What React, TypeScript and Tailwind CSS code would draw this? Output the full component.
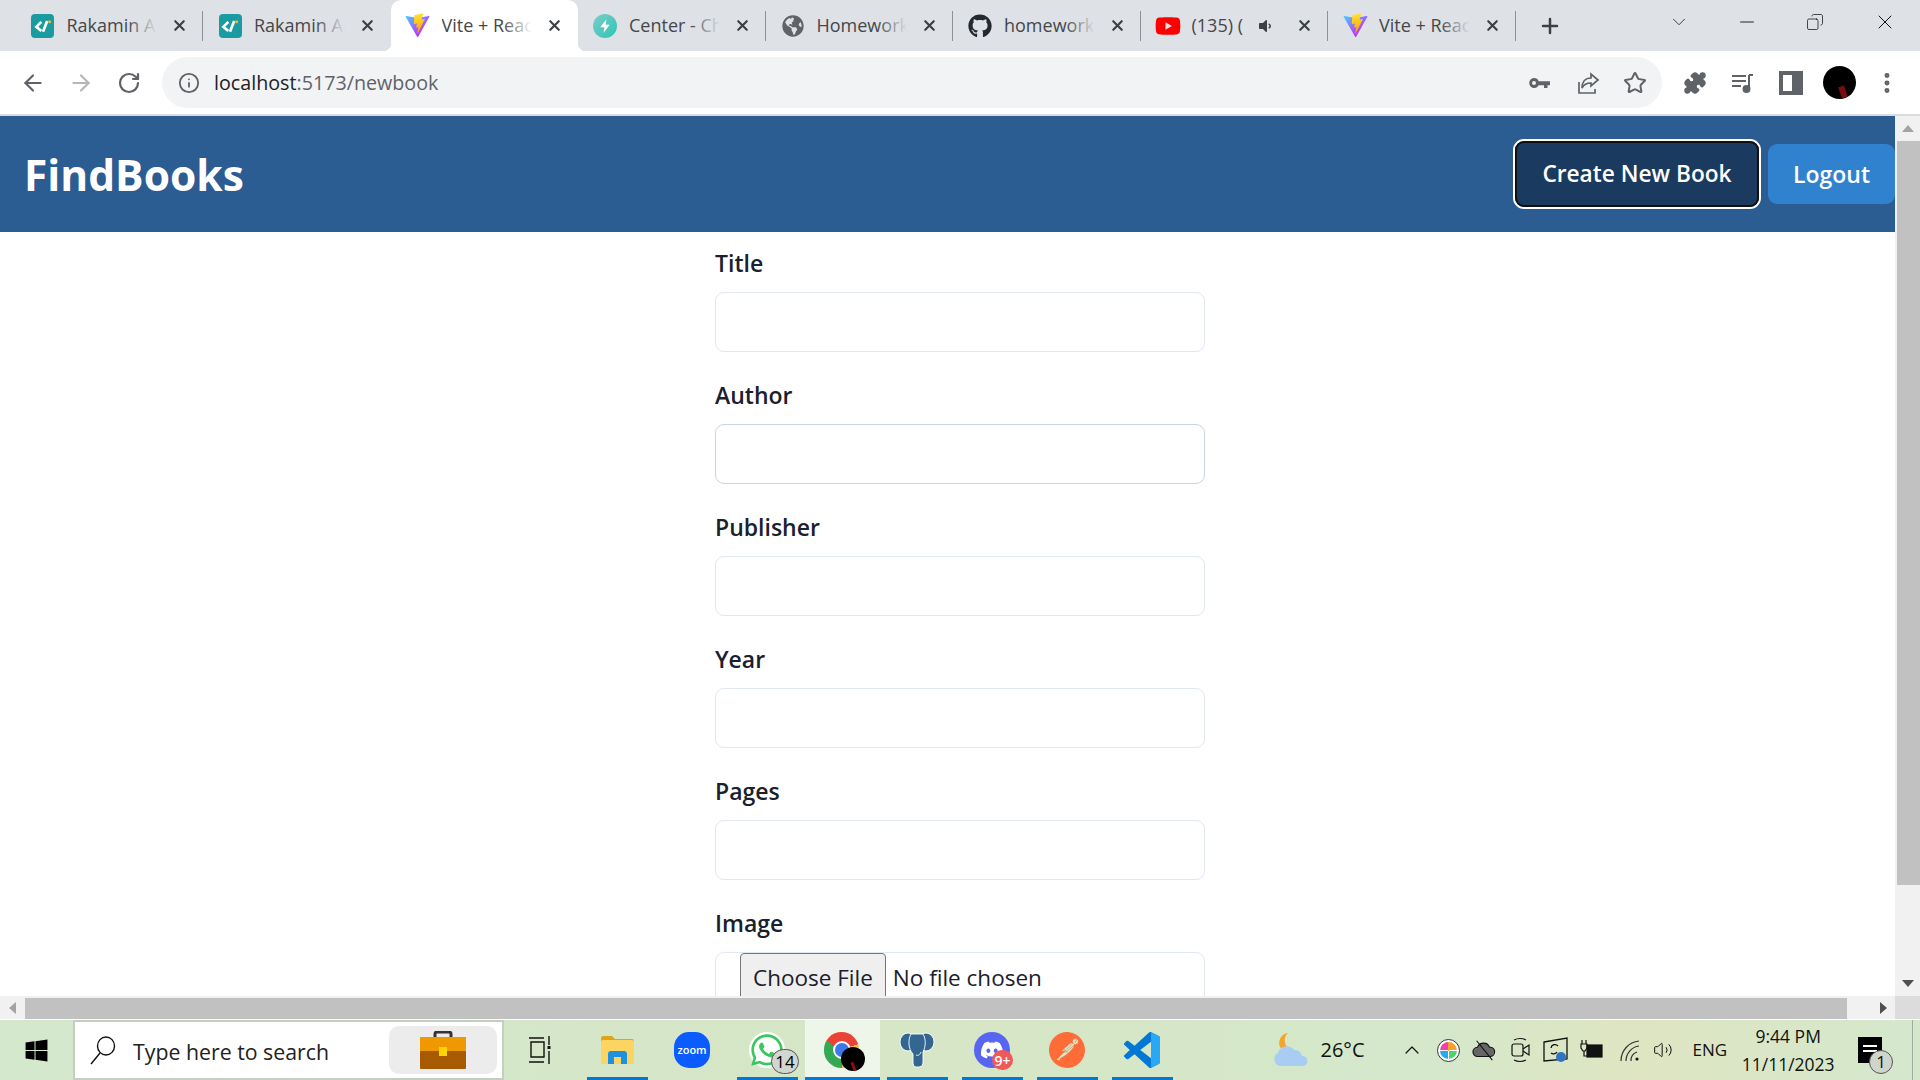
import { ArrowLeft, ArrowRight, RotateCw, Info, Star, X, Plus, ChevronDown, Minus, Copy, ChevronUp, Volume2, MoreVertical, Puzzle } from "lucide-react";
import { FaDiscord, FaGithub, FaGlobeAmericas, FaWhatsapp, FaVolumeDown, FaWindows, FaYoutube } from "react-icons/fa";
import { SiPostman } from "react-icons/si";
import type { ReactNode } from "react";

// --- Favicons ---
function RakaminIcon() {
  return (
    <span className="flex h-[24px] w-[23px] items-center justify-center rounded-[4px] bg-[#1a9ba1]">
      <svg viewBox="0 0 24 24" className="h-[20px] w-[20px]" fill="none" stroke="white" strokeWidth="3.2">
        <path d="M10 7 L4 13 L10 18" />
        <path d="M17 6 L12 19" />
        <circle cx="20" cy="7" r="1.8" fill="#f7b733" stroke="none" />
      </svg>
    </span>
  );
}

function ViteIcon() {
  return (
    <svg viewBox="0 0 410 404" className="h-[25px] w-[25px]">
      <defs>
        <linearGradient id="viteA" x1="6" y1="33" x2="235" y2="344" gradientUnits="userSpaceOnUse">
          <stop stopColor="#41D1FF" />
          <stop offset="1" stopColor="#BD34FE" />
        </linearGradient>
        <linearGradient id="viteB" x1="194" y1="8" x2="236" y2="293" gradientUnits="userSpaceOnUse">
          <stop stopColor="#FFEA83" />
          <stop offset="0.08" stopColor="#FFDD35" />
          <stop offset="1" stopColor="#FFA800" />
        </linearGradient>
      </defs>
      <path d="M399.6 59.5L215.9 388.2c-3.8 6.8-13.5 6.8-17.4.1L11.2 59.5c-4.2-7.4 2.1-16.3 10.4-14.8l183.9 32.9c1.2.2 2.4.2 3.5 0l180-32.9c8.3-1.5 14.7 7.3 10.5 14.8z" fill="url(#viteA)" />
      <path d="M292.965 1.574L156.801 28.255c-2.2.4-3.9 2.3-4 4.6l-8.4 141.5c-.2 3.3 2.9 5.9 6.1 5.2l37.9-8.7c3.6-.8 6.8 2.3 6.1 5.9l-11.3 55.2c-.7 3.7 2.8 6.9 6.4 5.8l23.4-7.1c3.6-1.1 7.1 2.1 6.4 5.8l-17.9 86.6c-1.1 5.4 6.1 8.4 9.1 3.7l2-3.1 110.9-221.3c1.9-3.7-1.3-7.9-5.4-7.1l-39 7.5c-3.7.7-6.8-2.7-5.8-6.3l25.5-88.3c1-3.6-2.1-7.1-5.9-6.3z" fill="url(#viteB)" />
    </svg>
  );
}

function ChakraIcon() {
  return (
    <span className="flex h-[24px] w-[24px] items-center justify-center rounded-full bg-[linear-gradient(135deg,#7bcdc8,#2fc5b6)]">
      <svg viewBox="0 0 24 24" className="h-[16px] w-[16px]" fill="white">
        <path d="M14 2 L5 14 h6 l-1 8 L19 10 h-6 z" />
      </svg>
    </span>
  );
}

// --- Tabs ---
interface TabData {
  title: string;
  icon: ReactNode;
  active?: boolean;
  sep?: boolean;
  audio?: boolean;
}

const TABS: TabData[] = [
  { title: "Rakamin Academy", icon: <RakaminIcon />, sep: true },
  { title: "Rakamin Academy", icon: <RakaminIcon /> },
  { title: "Vite + React", icon: <ViteIcon />, active: true },
  { title: "Center - Chakra", icon: <ChakraIcon />, sep: true },
  { title: "Homework", icon: <FaGlobeAmericas className="h-[22px] w-[22px] text-[#5f6368]" />, sep: true },
  { title: "homework", icon: <FaGithub className="h-[24px] w-[24px] text-[#24292f]" />, sep: true },
  { title: "(135) (", icon: <FaYoutube className="h-[26px] w-[26px] text-[#ff0000]" />, sep: true, audio: true },
  { title: "Vite + React", icon: <ViteIcon />, sep: true },
];

function Tab({ tab }: { tab: TabData }) {
  return (
    <div className={`relative flex h-[51px] w-[187.5px] shrink-0 items-center pl-[14px] pr-[15px] ${tab.active ? "rounded-t-[10px] bg-white" : ""}`}>
      {tab.active && (
        <>
          <span className="absolute bottom-0 left-[-8px] h-[8px] w-[8px] bg-[radial-gradient(circle_at_0_0,#dee1e6_8px,#ffffff_8.5px)]" />
          <span className="absolute bottom-0 right-[-8px] h-[8px] w-[8px] bg-[radial-gradient(circle_at_100%_0,#dee1e6_8px,#ffffff_8.5px)]" />
        </>
      )}
      <span className="flex w-[26px] shrink-0 items-center justify-center">{tab.icon}</span>
      <span className="relative ml-[11px] flex-1 overflow-hidden whitespace-nowrap text-[18px] text-[#45474a]">
        {tab.title}
        {!tab.audio && (
          <span className={`absolute inset-y-0 right-0 w-[30px] ${tab.active ? "bg-[linear-gradient(to_right,#ffffff00,#ffffff)]" : "bg-[linear-gradient(to_right,#dee1e600,#dee1e6)]"}`} />
        )}
      </span>
      {tab.audio && <FaVolumeDown className="ml-[2px] h-[16px] w-[16px] text-[#3c4043]" />}
      <X className={`h-[17px] w-[17px] shrink-0 text-[#3c4043] ${tab.audio ? "ml-[23px]" : "ml-[14px]"}`} strokeWidth={3} />
      {tab.sep && <span className="absolute right-0 top-[11px] h-[30px] w-px bg-[#8e9195]" />}
    </div>
  );
}

function TabStrip() {
  return (
    <div className="flex h-[51px] shrink-0 items-center bg-[#dee1e6] pl-[15.5px]">
      {TABS.map((tab, i) => (
        <Tab key={i} tab={tab} />
      ))}
      <Plus className="ml-[22px] h-[24px] w-[24px] text-[#3c4043]" strokeWidth={2.5} />
      <ChevronDown className="ml-[106px] mb-[8px] h-[22px] w-[22px] text-[#333]" strokeWidth={1} />
      <Minus className="ml-[46px] mb-[8px] h-[22px] w-[22px] text-[#111]" strokeWidth={1} />
      <Copy className="ml-[48px] mb-[8px] h-[18px] w-[18px] scale-x-[-1] text-[#111]" strokeWidth={1} />
      <X className="ml-[49px] mb-[8px] h-[24px] w-[24px] text-[#111]" strokeWidth={1} />
    </div>
  );
}

// --- Toolbar ---
function Toolbar() {
  return (
    <div className="flex h-[65px] shrink-0 items-start border-b-2 border-[#dadce0] bg-white pt-[6px]">
      <div className="flex h-[51px] w-[162px] shrink-0 items-center pl-[20px]">
        <ArrowLeft className="h-[26px] w-[26px] text-[#5f6368]" strokeWidth={2} />
        <ArrowRight className="ml-[22px] h-[26px] w-[26px] text-[#b4b6b9]" strokeWidth={2} />
        <RotateCw className="ml-[23px] h-[24px] w-[24px] text-[#5f6368]" strokeWidth={2.2} />
      </div>
      <div className="flex h-[51px] w-[1500px] shrink-0 items-center rounded-full bg-[#f1f3f4] pl-[16px]">
        <Info className="h-[22px] w-[22px] text-[#5f6368]" strokeWidth={2} />
        <span className="ml-[14px] text-[19.7px] text-[#202124]">
          localhost<span className="text-[#5f6368]">:5173/newbook</span>
        </span>
        <svg viewBox="0 0 24 24" className="ml-auto h-[24px] w-[24px] fill-[#5f6368]">
          <path d="M7 7a5 5 0 0 1 4.7 3.3H23v4h-2.5V17H17v-2.7h-5.3A5 5 0 1 1 7 7zm0 3a2 2 0 1 0 0 4 2 2 0 0 0 0-4z" />
        </svg>
        <svg viewBox="0 0 24 24" className="ml-[25px] h-[24px] w-[24px]" fill="none" stroke="#5f6368" strokeWidth="1.7">
          <path d="M3 11 V22 H19 V18" />
          <path d="M22 9 L15 3 V7 C9 7 6 11 6 17 C8 13 11 12 15 12 V15 Z" />
        </svg>
        <Star className="ml-[23px] mr-[15px] h-[24px] w-[24px] text-[#5f6368]" strokeWidth={2} />
      </div>
      <div className="flex h-[51px] flex-1 items-center pl-[21px]">
        <Puzzle className="h-[24px] w-[24px] fill-[#5f6368] text-[#5f6368]" strokeWidth={1.5} />
        <svg viewBox="0 0 24 24" className="ml-[24px] h-[24px] w-[24px]" fill="none" stroke="#5f6368" strokeWidth="2">
          <path d="M1 5h14M1 10h14M1 15h9" />
          <path d="M18 4v14" />
          <path d="M18 4h4" />
          <circle cx="15.5" cy="18" r="3" fill="#5f6368" />
        </svg>
        <span className="ml-[24px] flex h-[24px] w-[24px] justify-start border-[4px] border-r-[11px] border-[#5f6368] bg-white" />
        <span className="relative ml-[20px] block h-[33px] w-[33px] overflow-hidden rounded-full bg-black">
          <span className="absolute bottom-[1px] right-[10px] h-[12px] w-[6px] rotate-[-20deg] bg-[#7a0c0c]" />
        </span>
        <MoreVertical className="ml-[18px] h-[26px] w-[26px] text-[#5f6368]" strokeWidth={2.6} />
      </div>
    </div>
  );
}

// --- Page content ---
const FIELDS = ["Title", "Author", "Publisher", "Year", "Pages"];

function Page() {
  return (
    <div className="relative flex-1 overflow-hidden bg-white">
      <header className="flex h-[116px] items-center justify-between bg-[#2b5c92] pl-[24px]">
        <h1 className="pt-[2px] text-[42.5px] font-bold text-white">FindBooks</h1>
        <div className="flex items-center gap-[7px]">
          <button className="flex h-[70px] w-[248px] items-center justify-center rounded-[11px] border-[2px] border-white bg-[#1a3a5f] pt-[1px] text-[22.7px] font-semibold text-white outline-[2px] -outline-offset-4 outline-[#111]">
            Create New Book
          </button>
          <button className="flex h-[60px] w-[127px] items-center justify-center rounded-[9px] bg-[#3182ce] text-[23px] font-semibold text-white">
            Logout
          </button>
        </div>
      </header>
      <form className="ml-[715px] w-[490px] pt-[12px]">
        {FIELDS.map((f) => (
          <div key={f} className="mb-[24px]">
            <label className="mb-[12px] block pt-[2px] text-[23px] font-semibold leading-[34px] text-[#1a202c]">{f}</label>
            <input
              type="text"
              className={`block h-[60px] w-full rounded-[9px] border px-[24px] ${f === "Author" ? "border-[#cbd5e0]" : "border-[#e2e8f0]"}`}
            />
          </div>
        ))}
        <div>
          <label className="mb-[12px] block pt-[2px] text-[23px] font-semibold leading-[34px] text-[#1a202c]">Image</label>
          <input
            type="file"
            className="block h-[60px] w-full overflow-hidden rounded-[9px] border border-[#e2e8f0] pl-[24px] text-[22.5px] text-[#1a202c] file:mr-[7px] file:h-[50px] file:rounded-[4px] file:border file:border-[#767676] file:bg-[#efefef] file:px-[12px] file:text-[22.5px]"
          />
        </div>
      </form>
    </div>
  );
}

function VScrollbar() {
  return (
    <div className="flex w-[25px] shrink-0 flex-col items-center bg-[#f1f1f1]">
      <div className="flex h-[25px] w-full items-center justify-center">
        <span className="h-0 w-0 border-x-[6px] border-b-[7px] border-x-transparent border-b-[#a3a3a3]" />
      </div>
      <div className="ml-[2px] h-[744px] w-[23px] bg-[#c1c1c1]" />
      <div className="mt-auto flex h-[25px] w-full items-center justify-center">
        <span className="h-0 w-0 border-x-[6px] border-t-[7px] border-x-transparent border-t-[#505050]" />
      </div>
    </div>
  );
}

function HScrollbar() {
  return (
    <div className="flex h-[24px] shrink-0 items-start border-b border-white bg-[#f1f1f1]">
      <div className="flex h-[23px] w-[25px] items-center justify-center">
        <span className="h-0 w-0 border-y-[6px] border-r-[7px] border-y-transparent border-r-[#a3a3a3]" />
      </div>
      <div className="mt-[2px] h-[21px] w-[1822px] bg-[#c1c1c1]" />
      <div className="flex h-[23px] flex-1 items-center justify-end pr-[8px]">
        <span className="h-0 w-0 border-y-[6px] border-l-[7px] border-y-transparent border-l-[#505050]" />
      </div>
      <div className="h-[23px] w-[25px] bg-[#dcdcdc]" />
    </div>
  );
}

// --- Taskbar ---
function FolderIcon() {
  return (
    <svg viewBox="0 0 34 30" className="h-[30px] w-[34px]">
      <path d="M1 3 a2 2 0 0 1 2-2 h9 l3 3 h17 a2 2 0 0 1 2 2 v6 H1 z" fill="#e0a31c" />
      <rect x="1" y="5" width="33" height="24" rx="2" fill="#fcd462" />
      <path d="M8 29 V19 a3 3 0 0 1 3-3 h13 a3 3 0 0 1 3 3 v10 h-6 v-7 h-7 v7 z" fill="#1f8fe0" />
    </svg>
  );
}

function ChromeIcon() {
  return (
    <span className="relative block h-[36px] w-[36px]">
      <span className="flex h-[36px] w-[35px] items-center justify-center rounded-full bg-[conic-gradient(#ea4335_0deg_70deg,#fbc02d_70deg_180deg,#34a853_180deg_300deg,#ea4335_300deg)]">
        <span className="h-[18px] w-[18px] rounded-full border-[2px] border-white bg-[#3c78e8]" />
      </span>
      <span className="absolute bottom-[-3px] right-[-5px] flex h-[24px] w-[24px] items-end justify-center overflow-hidden rounded-full bg-black">
        <span className="h-[9px] w-[3px] rotate-[-20deg] bg-[#8a0f0f]" />
      </span>
    </span>
  );
}

function PostgresIcon() {
  return (
    <svg viewBox="0 0 36 36" className="h-[36px] w-[36px]" fill="#336791" stroke="#ffffff" strokeWidth="0.9">
      <ellipse cx="9" cy="10" rx="8" ry="9" />
      <ellipse cx="27" cy="10" rx="8" ry="9" />
      <path d="M12 2 h12 c3 5 3 12 0 18 v11 q0 4-4 4 h-3 q-3 0-3-4 v-9 c-5-5-5-15-2-20z" />
      <path d="M22 20 c-1 3-3 4-5 3" fill="none" />
    </svg>
  );
}

function VSCodeIcon() {
  return (
    <svg viewBox="0 0 24 24" className="h-[36px] w-[36px]">
      <path d="M23.15 2.587L18.21.21a1.494 1.494 0 0 0-1.705.29l-9.46 8.63-4.12-3.128a.999.999 0 0 0-1.276.057L.327 7.261A1 1 0 0 0 .326 8.74L3.899 12 .326 15.26a1 1 0 0 0 .001 1.479L1.65 17.94a.999.999 0 0 0 1.276.057l4.12-3.128 9.46 8.63a1.492 1.492 0 0 0 1.704.29l4.942-2.377A1.5 1.5 0 0 0 24 20.06V3.939a1.5 1.5 0 0 0-.85-1.352zm-5.146 14.861L10.826 12l7.178-5.448v10.896z" fill="#0078d4" />
      <path d="M18 .1L23.15 2.587A1.5 1.5 0 0 1 24 3.939V20.06a1.5 1.5 0 0 1-.85 1.352L18 23.9z" fill="#29a9f5" />
    </svg>
  );
}

function Slot({ children, on, active }: { children: ReactNode; on?: boolean; active?: boolean }) {
  return (
    <div className={`relative flex h-[60px] w-[75px] shrink-0 items-center justify-center ${active ? "bg-[#eef6ea]" : ""}`}>
      {children}
      {on && <span className={`absolute bottom-0 h-[3px] bg-[#0078d4] ${active ? "inset-x-0" : "inset-x-[7px]"}`} />}
    </div>
  );
}

function Taskbar() {
  return (
    <div className="flex h-[60px] shrink-0 items-center bg-[linear-gradient(90deg,#d4e8cd,#d6e6c6_50%,#d5e8cb_75%,#dfe5c2_85%,#d4e8cd)] text-[#111]">
      <FaWindows className="ml-[24px] h-[25px] w-[25px] text-black" />
      <div className="ml-[24px] flex h-[60px] w-[431px] shrink-0 items-center border-2 border-[#c4cfc0] bg-white pl-[15px] pr-[5px]">
        <svg viewBox="0 0 26 30" className="h-[30px] w-[26px]" fill="none" stroke="#111" strokeWidth="1.4">
          <ellipse cx="16" cy="11" rx="8.5" ry="9" />
          <path d="M10 18 L1 29" />
        </svg>
        <span className="ml-[17px] pt-[3px] text-[21.3px] text-[#222]">Type here to search</span>
        <div className="ml-auto flex h-[48px] w-[108px] items-center justify-center rounded-[10px] bg-[#ececec]">
          <svg viewBox="0 0 46 38" className="h-[38px] w-[46px]">
            <path d="M15 6 V3 a2 2 0 0 1 2-2 h12 a2 2 0 0 1 2 2 v3" fill="none" stroke="#333" strokeWidth="3" />
            <rect x="0" y="6" width="46" height="16" fill="#ef9800" />
            <rect x="0" y="20" width="46" height="18" rx="1" fill="#a85a00" />
            <rect x="19" y="16" width="8" height="9" fill="#ffd400" />
          </svg>
        </div>
      </div>
      <svg viewBox="0 0 24 30" className="ml-[24px] h-[30px] w-[24px] shrink-0" fill="none" stroke="#111" strokeWidth="1.4">
        <path d="M1 3h15M1 27h15M3 7h13v15H3zM21 1v9M21 16v13" />
        <rect x="19.5" y="11" width="3" height="3" fill="#111" stroke="none" />
      </svg>
      <div className="ml-[27.5px] flex">
        <Slot on><FolderIcon /></Slot>
        <Slot>
          <span className="flex h-[36px] w-[36px] items-center justify-center rounded-[15px] bg-[#0b5cff] text-[11px] font-semibold text-white">zoom</span>
        </Slot>
        <Slot on>
          <span className="relative">
            <span className="flex h-[36px] w-[36px] items-center justify-center rounded-full bg-white">
              <FaWhatsapp className="h-[36px] w-[36px] text-[#3ac75f]" />
            </span>
            <span className="absolute bottom-[-6px] right-[-14px] flex h-[25px] w-[28px] items-center justify-center rounded-full border border-[#555] bg-[#d2d6d0] text-[17px] text-black">14</span>
          </span>
        </Slot>
        <Slot on active><ChromeIcon /></Slot>
        <Slot on><PostgresIcon /></Slot>
        <Slot on>
          <span className="relative">
            <span className="flex h-[36px] w-[36px] items-center justify-center rounded-full bg-[#5865f2]">
              <FaDiscord className="h-[24px] w-[24px] text-white" />
            </span>
            <span className="absolute bottom-[-2px] right-[-3px] flex h-[20px] w-[21px] items-center justify-center rounded-full bg-[#ee5a5a] text-[14px] font-semibold text-white">9+</span>
          </span>
        </Slot>
        <Slot on><SiPostman className="h-[36px] w-[36px] text-[#ff6c37]" /></Slot>
        <Slot on><VSCodeIcon /></Slot>
      </div>
      <div className="ml-[92px] flex h-[60px] items-center">
        <svg viewBox="0 0 37 36" className="h-[36px] w-[37px]">
          <path d="M16 1 a10 10 0 0 0 -8 14 a10 10 0 0 0 12 3 a10 10 0 0 1 -4-17z" fill="#f4a52e" />
          <path d="M8 34 a7 7 0 0 1 -2-13 a9 9 0 0 1 16-3 a7 7 0 0 1 8 6 a5 5 0 0 1 1 10z" fill="#a9cdf2" />
        </svg>
        <span className="ml-[12px] text-[20px]">26°C</span>
        <ChevronUp className="ml-[35px] h-[24px] w-[24px]" strokeWidth={1.2} />
        <span className="ml-[13px] flex h-[23px] w-[23px] items-center justify-center rounded-full border border-[#333] bg-white p-[2px]">
          <span className="h-full w-full rounded-full bg-[conic-gradient(#f7a128_0deg_86deg,#fff_86deg_94deg,#4bd46b_94deg_176deg,#fff_176deg_184deg,#28a8f0_184deg_266deg,#fff_266deg_274deg,#f03fb0_274deg_356deg,#fff_356deg)]" />
        </span>
        <svg viewBox="0 0 26 26" className="ml-[11px] h-[24px] w-[26px]" fill="#666" stroke="#111" strokeWidth="1.2">
          <path d="M6 20 a5 5 0 0 1 0-10 a7 7 0 0 1 13 0 a5 5 0 0 1 1 10z" />
          <path d="M5 3 L22 24" fill="none" />
        </svg>
        <svg viewBox="0 0 20 30" className="ml-[14px] h-[30px] w-[20px]" fill="none" stroke="#111" strokeWidth="1.2">
          <rect x="1" y="9" width="11" height="12" rx="2" />
          <path d="M12 14l6-4v10l-6-4M3 5q6-3 12 0M3 25q6 3 12 0" />
        </svg>
        <svg viewBox="0 0 26 26" className="ml-[12px] h-[26px] w-[26px]" fill="none" stroke="#111" strokeWidth="1.3">
          <path d="M1 5 L24 1 V22 L1 24z" />
          <path d="M8 11a4 4 0 0 1 7-2M14 15a4 4 0 0 1-6 1" />
          <circle cx="18" cy="20" r="5" fill="#2e74c0" stroke="none" />
        </svg>
        <svg viewBox="0 0 24 22" className="ml-[11px] h-[22px] w-[24px]" fill="none" stroke="#111" strokeWidth="1.2">
          <path d="M2 1v4M6 1v4M1 5h6v4l-2 3H3L1 9zM4 12v5h3" />
          <rect x="7" y="6" width="15" height="12" fill="#111" />
        </svg>
        <svg viewBox="0 0 22 24" className="ml-[16px] h-[24px] w-[22px]" fill="none" stroke="#333" strokeWidth="1.2">
          <path d="M1 23A20 20 0 0 1 19 3M6 23A15 15 0 0 1 19 8M11 23A9 9 0 0 1 17 14" />
          <circle cx="17" cy="21" r="1.6" fill="#111" stroke="none" />
        </svg>
        <Volume2 className="ml-[11px] h-[24px] w-[20px]" strokeWidth={1.2} />
        <span className="ml-[20px] text-[17px]">ENG</span>
        <div className="ml-[15px] flex w-[92px] flex-col items-center text-[17.5px] leading-[28px]">
          <span>9:44 PM</span>
          <span>11/11/2023</span>
        </div>
        <span className="relative ml-[24px] block h-[26px] w-[24px] bg-black">
          <span className="absolute left-[5px] top-[8px] h-[2px] w-[14px] bg-white" />
          <span className="absolute left-[5px] top-[13px] h-[2px] w-[14px] bg-white" />
          <span className="absolute bottom-[-11px] right-[-11px] flex h-[24px] w-[24px] items-center justify-center rounded-full border border-[#555] bg-[#cfd4cc] text-[17px]">1</span>
        </span>
        <span className="ml-[30px] h-[60px] w-px bg-[#9fae9c]" />
      </div>
    </div>
  );
}

export default function App() {
  return (
    <div className="flex h-screen w-full flex-col overflow-hidden bg-white font-['Open_Sans','Noto_Sans',sans-serif]">
      <TabStrip />
      <Toolbar />
      <div className="flex h-[880px] shrink-0">
        <Page />
        <VScrollbar />
      </div>
      <HScrollbar />
      <Taskbar />
    </div>
  );
}
